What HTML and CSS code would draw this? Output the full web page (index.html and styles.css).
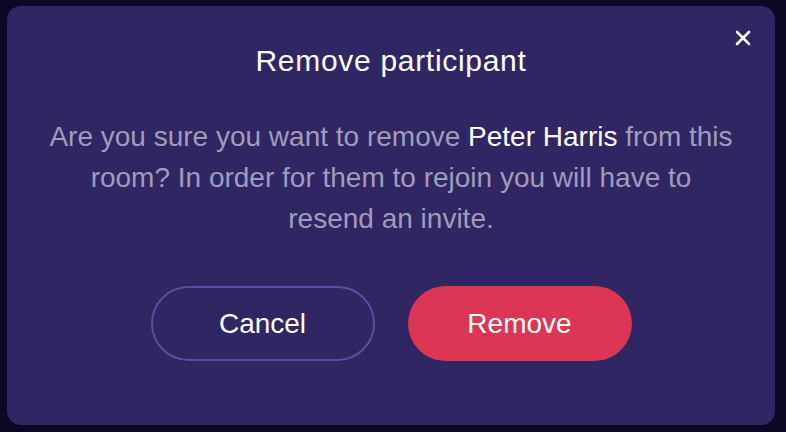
FILE: index.html
```html
<!DOCTYPE html>
<html>
<head>
<meta charset="utf-8">
<link rel="stylesheet" href="styles.css">
</head>
<body>
<div class="dialog">
  <button class="close" aria-label="Close">
    <svg width="16" height="16" viewBox="0 0 16 16"><path d="M2 2L14 14M14 2L2 14" stroke="#fff" stroke-width="2.6" stroke-linecap="round"/></svg>
  </button>
  <h1 class="title">Remove participant</h1>
  <p class="message">Are you sure you want to remove <strong>Peter Harris</strong> from this room? In order for them to rejoin you will have to resend an invite.</p>
  <div class="actions">
    <button class="btn btn-cancel">Cancel</button>
    <button class="btn btn-remove">Remove</button>
  </div>
</div>
</body>
</html>
```
FILE: styles.css
```css
html, body {
  margin: 0;
  padding: 0;
  background: #0b0826;
  height: 100%;
}
body {
  padding: 6px 11px 7px 7px;
  box-sizing: border-box;
  font-family: "Liberation Sans", Arial, sans-serif;
}
.dialog {
  position: relative;
  background: #302664;
  border-radius: 14px;
  height: 419px;
  display: flex;
  flex-direction: column;
  align-items: center;
  box-sizing: border-box;
  padding-top: 38px;
}
.close {
  position: absolute;
  top: 24px;
  right: 24px;
  background: none;
  border: 0;
  padding: 0;
  width: 16px;
  height: 16px;
  display: flex;
}
.title {
  margin: 0;
  color: #fff;
  font-weight: normal;
  font-size: 30px;
  line-height: 34px;
  letter-spacing: 0.7px;
}
.message {
  margin: 38px 0 0;
  width: 692px;
  text-align: center;
  color: #a09cbc;
  font-size: 28px;
  line-height: 41px;
}
.message strong {
  color: #fff;
  font-weight: normal;
}
.actions {
  display: flex;
  gap: 33px;
  margin-top: 47px;
}
.btn {
  width: 224px;
  height: 75px;
  border-radius: 38px;
  font-family: "Liberation Sans", Arial, sans-serif;
  font-size: 28px;
  color: #fff;
  box-sizing: border-box;
  cursor: pointer;
  padding: 0;
}
.btn-cancel {
  background: transparent;
  border: 2px solid #5a4ea2;
}
.btn-remove {
  background: #dc3555;
  border: 0;
}
```
